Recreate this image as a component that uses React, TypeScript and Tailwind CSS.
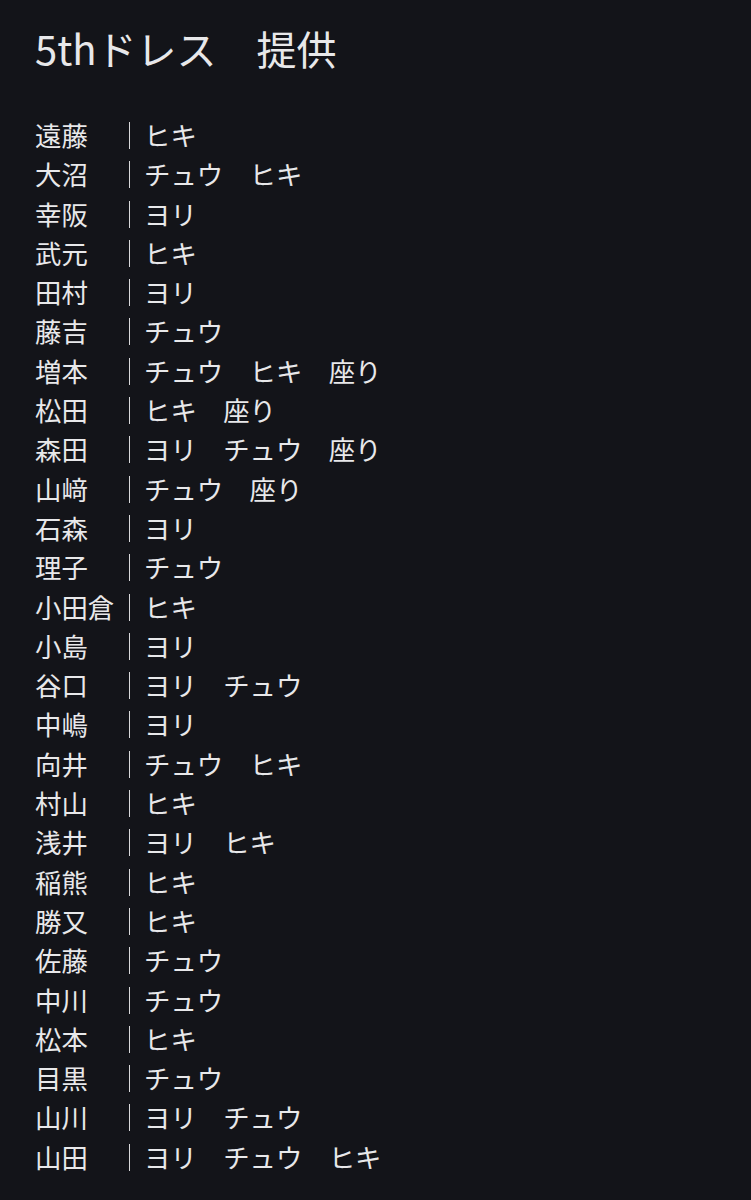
const rows: [string, string[]][] = [
  ['遠藤', ['ヒキ']],
  ['大沼', ['チュウ', 'ヒキ']],
  ['幸阪', ['ヨリ']],
  ['武元', ['ヒキ']],
  ['田村', ['ヨリ']],
  ['藤吉', ['チュウ']],
  ['増本', ['チュウ', 'ヒキ', '座り']],
  ['松田', ['ヒキ', '座り']],
  ['森田', ['ヨリ', 'チュウ', '座り']],
  ['山﨑', ['チュウ', '座り']],
  ['石森', ['ヨリ']],
  ['理子', ['チュウ']],
  ['小田倉', ['ヒキ']],
  ['小島', ['ヨリ']],
  ['谷口', ['ヨリ', 'チュウ']],
  ['中嶋', ['ヨリ']],
  ['向井', ['チュウ', 'ヒキ']],
  ['村山', ['ヒキ']],
  ['浅井', ['ヨリ', 'ヒキ']],
  ['稲熊', ['ヒキ']],
  ['勝又', ['ヒキ']],
  ['佐藤', ['チュウ']],
  ['中川', ['チュウ']],
  ['松本', ['ヒキ']],
  ['目黒', ['チュウ']],
  ['山川', ['ヨリ', 'チュウ']],
  ['山田', ['ヨリ', 'チュウ', 'ヒキ']],
]

export default function App() {
  return (
    <div
      className="w-[751px] h-[1200px] bg-[#131419] text-[#e8e8ea] pl-[35px] overflow-hidden"
      style={{ fontFamily: '"Noto Sans CJK JP", "Noto Sans", sans-serif' }}
    >
      <h1 className="pt-[23px] text-[40px] leading-[50px] font-normal whitespace-pre">
        5thドレス　提供
      </h1>
      <div className="mt-[42px] text-[26.4px] leading-[39.3px]">
        {rows.map(([name, parts]) => (
          <div key={name} className="flex whitespace-pre">
            <span className="w-[94px] shrink-0">{name}</span>
            <span className="w-[15px] flex justify-start">
              <span className="block w-px h-[27px] bg-[#d8d8da] mt-[7px]" />
            </span>
            <span>{parts.join('　')}</span>
          </div>
        ))}
      </div>
    </div>
  )
}
